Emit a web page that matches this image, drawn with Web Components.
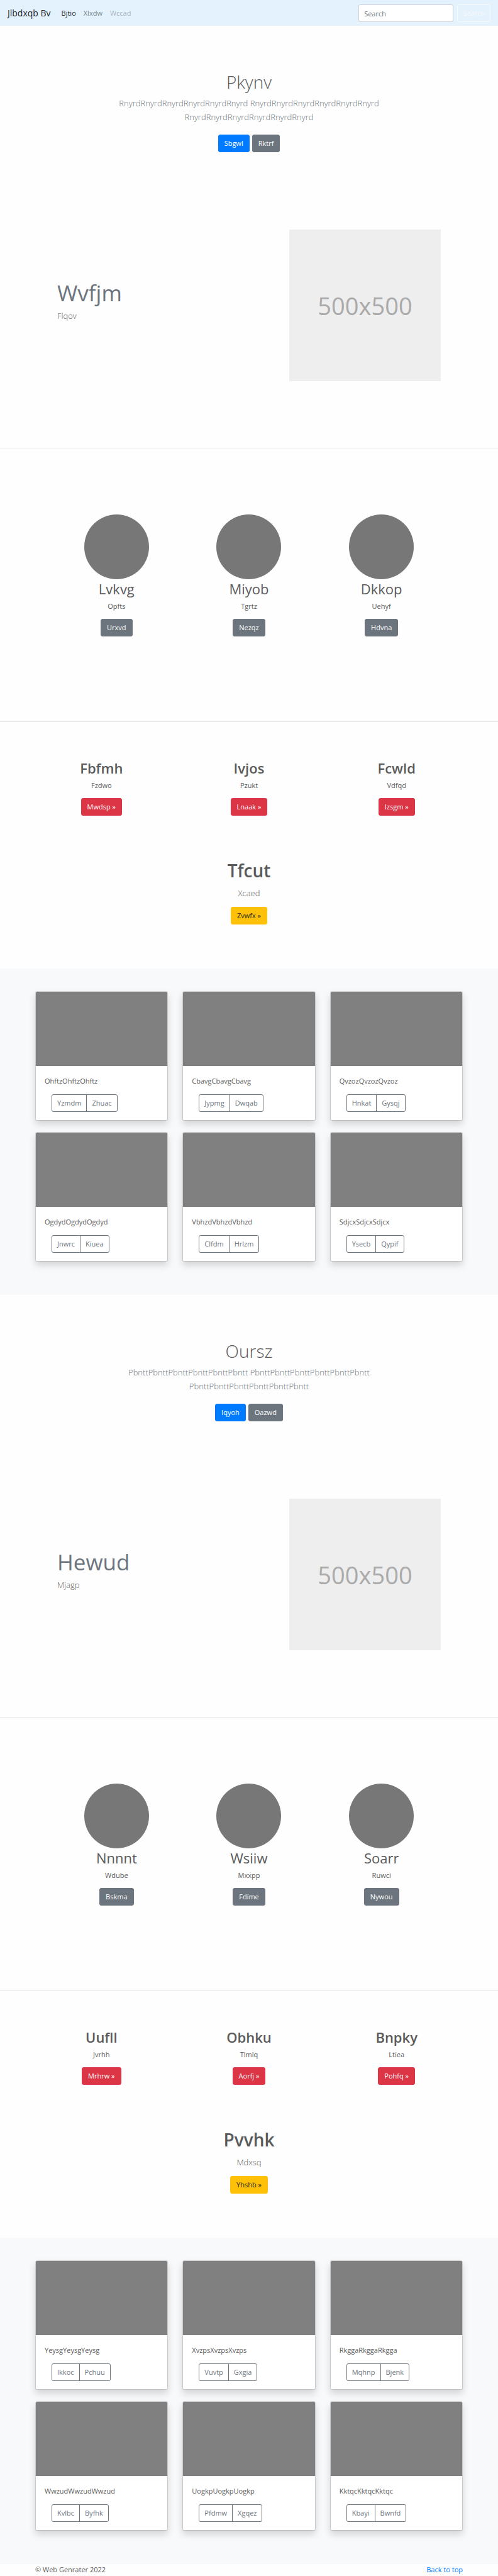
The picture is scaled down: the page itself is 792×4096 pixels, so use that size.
<!DOCTYPE html>
<html lang="en">
<head>
<meta charset="utf-8">
<meta name="viewport" content="width=device-width, initial-scale=1">
<title>Jlbdxqb Bv</title>
<style>
body { margin: 0; background: #fefefe; color: #5a5a5a; font: 11px/18px "Open Sans", "Noto Sans", sans-serif; }
</style>
</head>
<body>
<site-nav id="top"></site-nav>
<main>
  <page-hero>
    <span slot="title">Pkynv</span>
    RnyrdRnyrdRnyrdRnyrdRnyrdRnyrd RnyrdRnyrdRnyrdRnyrdRnyrdRnyrd RnyrdRnyrdRnyrdRnyrdRnyrdRnyrd
    <ui-button slot="actions" kind="primary">Sbgwl</ui-button>
    <ui-button slot="actions">Rktrf</ui-button>
  </page-hero>
  <feature-row><span slot="title">Wvfjm</span>Flqov</feature-row>
  <profile-row>
    <profile-item name="Lvkvg" text="Opfts" action="Urxvd"></profile-item>
    <profile-item name="Miyob" text="Tgrtz" action="Nezqz"></profile-item>
    <profile-item name="Dkkop" text="Uehyf" action="Hdvna"></profile-item>
  </profile-row>
  <topic-row>
    <topic-item name="Fbfmh" text="Fzdwo" action="Mwdsp"></topic-item>
    <topic-item name="Ivjos" text="Pzukt" action="Lnaak"></topic-item>
    <topic-item name="Fcwld" text="Vdfqd" action="Izsgm"></topic-item>
  </topic-row>
  <call-out name="Tfcut" text="Xcaed" action="Zvwfx"></call-out>
  <card-album>
    <album-card first="Yzmdm" second="Zhuac">OhftzOhftzOhftz</album-card>
    <album-card first="Jypmg" second="Dwqab">CbavgCbavgCbavg</album-card>
    <album-card first="Hnkat" second="Gysqj">QvzozQvzozQvzoz</album-card>
    <album-card first="Jnwrc" second="Kiuea">OgdydOgdydOgdyd</album-card>
    <album-card first="Clfdm" second="Hrlzm">VbhzdVbhzdVbhzd</album-card>
    <album-card first="Ysecb" second="Qypif">SdjcxSdjcxSdjcx</album-card>
  </card-album>

  <page-hero>
    <span slot="title">Oursz</span>
    PbnttPbnttPbnttPbnttPbnttPbntt PbnttPbnttPbnttPbnttPbnttPbntt PbnttPbnttPbnttPbnttPbnttPbntt
    <ui-button slot="actions" kind="primary">Iqyoh</ui-button>
    <ui-button slot="actions">Oazwd</ui-button>
  </page-hero>
  <feature-row><span slot="title">Hewud</span>Mjagp</feature-row>
  <profile-row>
    <profile-item name="Nnnnt" text="Wdube" action="Bskma"></profile-item>
    <profile-item name="Wsiiw" text="Mxxpp" action="Fdime"></profile-item>
    <profile-item name="Soarr" text="Ruwci" action="Nywou"></profile-item>
  </profile-row>
  <topic-row>
    <topic-item name="Uufll" text="Jvrhh" action="Mrhrw"></topic-item>
    <topic-item name="Obhku" text="Tlmlq" action="Aorfj"></topic-item>
    <topic-item name="Bnpky" text="Ltiea" action="Pohfq"></topic-item>
  </topic-row>
  <call-out name="Pvvhk" text="Mdxsq" action="Yhshb"></call-out>
  <card-album>
    <album-card first="Ikkoc" second="Pchuu">YeysgYeysgYeysg</album-card>
    <album-card first="Vuvtp" second="Gxgia">XvzpsXvzpsXvzps</album-card>
    <album-card first="Mqhnp" second="Bjenk">RkggaRkggaRkgga</album-card>
    <album-card first="Kvlbc" second="Byfhk">WwzudWwzudWwzud</album-card>
    <album-card first="Pfdmw" second="Xgqez">UogkpUogkpUogkp</album-card>
    <album-card first="Kbayi" second="Bwnfd">KktqcKktqcKktqc</album-card>
  </card-album>
</main>
<site-footer></site-footer>

<script>
const base = `
  * { box-sizing: border-box; }
  :host { display: block; }
  h1, h2, h3, p { margin: 0; }
  a { text-decoration: none; }
`;

// Registers an element whose shadow root is filled from render(element).
function define(tag, render) {
  customElements.define(tag, class extends HTMLElement {
    constructor() {
      super();
      this.attachShadow({ mode: "open" });
    }
    connectedCallback() {
      const template = document.createElement("template");
      template.innerHTML = "<style>" + base + "</style>" + render(this);
      this.shadowRoot.replaceChildren(template.content.cloneNode(true));
    }
  });
}

define("ui-button", () => `
  <style>
    :host { display: inline-block; --fill: #6c757d; --ink: #fff; }
    :host([kind="primary"]) { --fill: #007bff; }
    :host([kind="danger"]) { --fill: #dc3545; }
    :host([kind="warning"]) { --fill: #ffc107; --ink: #212529; }
    button { display: block; height: 28px; padding: 0 9px; border: 1px solid var(--fill); border-radius: 3px;
      background: var(--fill); color: var(--ink); font: inherit; cursor: pointer; }
  </style>
  <button type="button"><slot></slot></button>`);

define("site-nav", () => `
  <style>
    nav { display: flex; align-items: center; padding: 7px 12px 6px; background: #e3f2fd; }
    .brand { margin-right: 17px; font-size: 14px; line-height: 22px; color: rgba(0,0,0,.9); }
    ul { display: flex; gap: 12px; margin: 0; padding: 0; list-style: none; flex: 1; }
    li a { color: rgba(0,0,0,.5); }
    li a.active { color: rgba(0,0,0,.9); }
    li a.disabled { color: rgba(0,0,0,.3); }
    form { display: flex; gap: 6px; }
    input, button { height: 28px; border-radius: 3px; font: inherit; }
    input { width: 151px; padding: 0 8px; border: 1px solid #ced4da; background: #fff; color: #495057; }
    input::placeholder { color: #6c757d; opacity: 1; }
    button { padding: 0 8px; border: 1px solid #f8f9fa; background: transparent; color: #f8f9fa; }
  </style>
  <nav>
    <a class="brand" href="#">Jlbdxqb Bv</a>
    <ul>
      <li><a class="active" href="#">Bjtio</a></li>
      <li><a href="#">Xlxdw</a></li>
      <li><a class="disabled" href="#" aria-disabled="true">Wccad</a></li>
    </ul>
    <form>
      <input type="search" placeholder="Search" aria-label="Search">
      <button type="submit">Search</button>
    </form>
  </nav>`);

define("page-hero", () => `
  <style>
    section { padding: 71px 20% 123px; text-align: center; }
    h1 { font-size: 28px; line-height: 36px; font-weight: 300; }
    p { margin-top: 5px; font-size: 13px; line-height: 22px; font-weight: 300; color: #6c757d; }
    .actions { display: flex; justify-content: center; gap: 4px; margin-top: 17px; }
  </style>
  <section>
    <h1><slot name="title"></slot></h1>
    <p><slot></slot></p>
    <div class="actions"><slot name="actions"></slot></div>
  </section>`);

define("feature-row", () => `
  <style>
    section { display: flex; justify-content: space-between; align-items: center; padding: 0 91px 106px; border-bottom: 1px solid #e5e5e5; }
    .text { padding-bottom: 14px; }
    h2 { font-size: 35px; line-height: 44px; font-weight: 400; color: #6c757d; }
    p { margin-top: 3px; font-size: 13px; line-height: 22px; font-weight: 300; }
    figure { display: grid; place-items: center; flex: 0 1 241px; aspect-ratio: 1; margin: 0; background: #eee; color: #aaa; font-size: 38px; line-height: 44px; }
  </style>
  <section>
    <div class="text"><h2><slot name="title"></slot></h2><p><slot></slot></p></div>
    <figure>500x500</figure>
  </section>`);

define("profile-row", () => `
  <style>
    section { display: grid; grid-template-columns: repeat(3, 1fr); padding: 105px 80px 135px; border-bottom: 1px solid #e5e5e5; }
  </style>
  <section><slot></slot></section>`);

define("profile-item", el => `
  <style>
    :host { text-align: center; }
    .avatar { width: 103px; height: 103px; margin: 0 auto 2px; border-radius: 50%; background: #777; }
    h2 { font-size: 22px; line-height: 26px; font-weight: 400; }
    p { margin: 6px 0 11px; }
    ui-button { vertical-align: top; }
  </style>
  <div class="avatar"></div>
  <h2>${el.getAttribute("name")}</h2>
  <p>${el.getAttribute("text")}</p>
  <ui-button>${el.getAttribute("action")}</ui-button>`);

define("topic-row", () => `
  <style>
    section { display: grid; grid-template-columns: repeat(3, 1fr); padding: 60px 44px 69px; }
  </style>
  <section><slot></slot></section>`);

define("topic-item", el => `
  <style>
    :host { text-align: center; }
    h2 { font-size: 22px; line-height: 26px; font-weight: 600; }
    p { margin: 6px 0 11px; }
    ui-button { vertical-align: top; }
  </style>
  <h2>${el.getAttribute("name")}</h2>
  <p>${el.getAttribute("text")}</p>
  <ui-button kind="danger">${el.getAttribute("action")} »</ui-button>`);

define("call-out", el => `
  <style>
    section { padding-bottom: 70px; text-align: center; }
    h2 { font-size: 28px; line-height: 36px; font-weight: 600; }
    p { margin: 7px 0 11px; font-size: 13px; line-height: 22px; font-weight: 300; }
    ui-button { vertical-align: top; }
  </style>
  <section>
    <h2>${el.getAttribute("name")}</h2>
    <p>${el.getAttribute("text")}</p>
    <ui-button kind="warning">${el.getAttribute("action")} »</ui-button>
  </section>`);

define("card-album", () => `
  <style>
    section { display: grid; grid-template-columns: repeat(3, 1fr); gap: 18px 23px; padding: 36px 56px 53px; background: #f8f9fa; }
  </style>
  <section><slot></slot></section>`);

define("album-card", el => `
  <style>
    article { border: 1px solid rgba(0,0,0,.125); border-radius: 3px; overflow: hidden; background: #fff; background-clip: padding-box;
      box-shadow: 0 6px 12px rgba(0,0,0,.15); }
    .cover { height: 118px; background: #808080; }
    .body { padding: 15px 14px 13px; }
    .group { display: flex; margin: 12px 0 0 11px; }
    button { height: 28px; padding: 0 8px; border: 1px solid #6c757d; background: transparent; color: #6c757d; font: inherit; }
    button:first-child { border-radius: 3px 0 0 3px; }
    button:last-child { margin-left: -1px; border-radius: 0 3px 3px 0; }
  </style>
  <article>
    <div class="cover"></div>
    <div class="body">
      <p><slot></slot></p>
      <div class="group" role="group">
        <button type="button">${el.getAttribute("first")}</button>
        <button type="button">${el.getAttribute("second")}</button>
      </div>
    </div>
  </article>`);

define("site-footer", () => `
  <style>
    footer { display: flex; justify-content: space-between; padding: 0 56px; line-height: 17px; }
    a { color: #007bff; }
  </style>
  <footer><span>© Web Genrater 2022</span><a href="#top">Back to top</a></footer>`);
</script>
</body>
</html>
